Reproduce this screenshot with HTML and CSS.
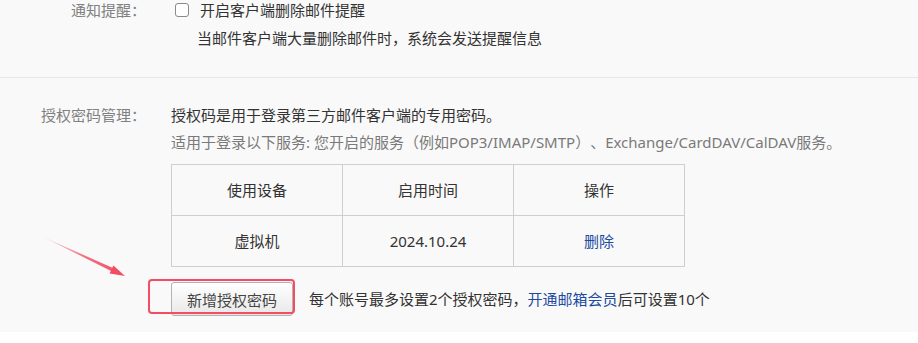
FILE: index.html
```html
<!DOCTYPE html>
<html lang="zh-CN">
<head>
    <meta charset="UTF-8">
    <meta name="viewport" content="width=device-width, initial-scale=1.0">
    <title>账户设置 - 客户端</title>
    <link rel="stylesheet" href="styles.css">
</head>
<body>

    <div class="panel">

        <!-- 通知提醒 -->
        <div class="row row-notice">
            <div class="label">通知提醒：</div>
            <div class="content">
                <label class="check"><input type="checkbox" class="check-box"><span>开启客户端删除邮件提醒</span></label>
                <p class="check-hint">当邮件客户端大量删除邮件时，系统会发送提醒信息</p>
            </div>
        </div>

        <!-- 授权密码管理 -->
        <div class="row row-auth">
            <div class="label">授权密码管理：</div>
            <div class="content">
                <p class="desc">授权码是用于登录第三方邮件客户端的专用密码。</p>
                <p class="desc desc-sub">适用于登录以下服务: 您开启的服务（例如POP3/IMAP/SMTP）、Exchange/CardDAV/CalDAV服务。</p>

                <table class="auth-table">
                    <thead>
                        <tr>
                            <th>使用设备</th>
                            <th>启用时间</th>
                            <th>操作</th>
                        </tr>
                    </thead>
                    <tbody>
                        <tr>
                            <td>虚拟机</td>
                            <td>2024.10.24</td>
                            <td><a href="#" class="link">删除</a></td>
                        </tr>
                    </tbody>
                </table>

                <div class="add-row">
                    <div class="btn-wrap">
                        <button class="btn">新增授权密码</button>
                        <span class="mark"></span>
                    </div>
                    <span class="add-tip">每个账号最多设置2个授权密码，<a href="#" class="link">开通邮箱会员</a>后可设置10个</span>
                </div>
            </div>
        </div>

        <!-- 标注箭头 -->
        <svg class="arrow" width="918" height="343" viewBox="0 0 918 343">
            <defs>
                <linearGradient id="arrowFade" x1="43" y1="237" x2="125" y2="276" gradientUnits="userSpaceOnUse">
                    <stop offset="0" stop-color="#f24d63" stop-opacity="0.15"/>
                    <stop offset="0.5" stop-color="#f24d63" stop-opacity="0.8"/>
                    <stop offset="1" stop-color="#f24d63"/>
                </linearGradient>
            </defs>
            <polygon points="43,237 113,268 111.6,271.2" fill="url(#arrowFade)"/>
            <polygon points="125,276 113.4,265.6 109.6,273.4" fill="#f24d63"/>
        </svg>
    </div>

</body>
</html>
```

FILE: styles.css
```css
body {
    margin: 0;
    background: #fff;
    font-family: "Noto Sans", "Noto Sans CJK SC", sans-serif;
    font-size: 15px;
    color: #333;
    text-spacing-trim: space-all;
}
p {
    margin: 0;
}
.panel {
    position: relative;
    background: #f9f9f9;
    padding-bottom: 16px;
}
.row {
    display: flex;
    gap: 25px;
}
.label {
    width: 146px;
    flex-shrink: 0;
    text-align: right;
    color: #808080;
}
.content {
    flex: 1;
}

/* 通知提醒 */
.row-notice {
    padding-bottom: 29px;
    border-bottom: 1px solid #e6e6e6;
    line-height: 20px;
}
.check {
    display: flex;
    align-items: center;
}
.check-box {
    appearance: none;
    box-sizing: border-box;
    width: 14px;
    height: 14px;
    margin: 0 11px 0 4px;
    border: 1px solid #8a8a8a;
    border-radius: 3px;
    background: #fff;
}
.check-hint {
    margin-top: 8px;
    padding-left: 26px;
}

/* 授权密码管理 */
.row-auth {
    padding-top: 24px;
    line-height: 27px;
}
.desc-sub {
    color: #7a7a7a;
}
.auth-table {
    width: 514px;
    margin-top: 8px;
    border-collapse: collapse;
    table-layout: fixed;
}
.auth-table th, .auth-table td {
    height: 50px;
    padding: 0;
    border: 1px solid #cfcfcf;
    text-align: center;
    font-weight: normal;
    line-height: 20px;
}
.link {
    color: #1d4ba0;
    text-decoration: none;
}
.add-row {
    display: flex;
    align-items: center;
    gap: 16px;
    margin-top: 15px;
}
.btn-wrap {
    position: relative;
}
.btn {
    display: block;
    height: 34px;
    padding: 0 15px;
    border: 1px solid #b3b3b3;
    border-radius: 3px;
    background: linear-gradient(#ffffff, #e8e8e8);
    color: #444;
    font-family: inherit;
    font-size: 15px;
}
.mark {
    position: absolute;
    left: -23px;
    top: -3px;
    right: -2px;
    bottom: 2px;
    border: 2px solid #f24d63;
    border-radius: 4px;
    pointer-events: none;
}
.arrow {
    position: absolute;
    left: 0;
    top: 0;
    pointer-events: none;
}
```
